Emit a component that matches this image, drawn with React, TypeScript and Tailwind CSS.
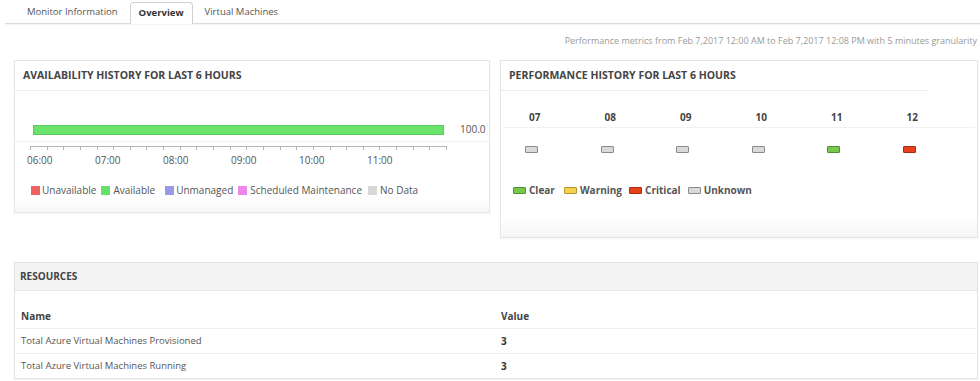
import React from "react";

const hours = ["06:00", "07:00", "08:00", "09:00", "10:00", "11:00"];
const perfCols = [
  { h: "07", fill: "#d9d9d9", stroke: "#8a8a8a" },
  { h: "08", fill: "#d9d9d9", stroke: "#8a8a8a" },
  { h: "09", fill: "#d9d9d9", stroke: "#8a8a8a" },
  { h: "10", fill: "#d9d9d9", stroke: "#8a8a8a" },
  { h: "11", fill: "#78c84e", stroke: "#4f8f30" },
  { h: "12", fill: "#e8401c", stroke: "#a82a10" },
];

function PerfBox({ fill, stroke }: { fill: string; stroke: string }) {
  return (
    <span
      className="inline-block w-[13px] h-[7px] rounded-[1px] border"
      style={{ background: fill, borderColor: stroke }}
    />
  );
}

export default function App() {
  const ticks = Array.from({ length: 26 }, (_, i) => 1 + (i * 416) / 25);
  return (
    <div className="w-[980px] h-[381px] bg-white overflow-hidden font-['Open_Sans',sans-serif] text-[#555]">
      {/* Tabs */}
      <div className="ml-[5px] h-[24px] flex items-end pl-[22px] border-b border-[#dcdcdc] shadow-[0_1px_1px_rgba(0,0,0,0.04)]">
        <div className="h-[21px] flex items-center text-[9.5px] text-[#555] mr-[12px]">Monitor Information</div>
        <div className="h-[22px] px-[8px] flex items-center text-[9.5px] font-bold text-[#333] bg-white border border-[#d0d0d0] border-b-0 rounded-t-[4px] -mb-px">
          Overview
        </div>
        <div className="h-[21px] ml-[12px] flex items-center text-[9.5px] text-[#555]">Virtual Machines</div>
      </div>

      {/* Metrics text */}
      <div className="mt-[10px] pr-[3px] text-right text-[9px] leading-[14px] text-[#9a9a9a]">
        Performance metrics from Feb 7,2017 12:00 AM to Feb 7,2017 12:08 PM with 5 minutes granularity
      </div>

      {/* Panels */}
      <div className="mt-[12px] pl-[14px] flex items-start gap-[10px]">
        {/* Availability */}
        <div className="w-[476px] h-[153px] border border-[#e6e6e6] shadow-[0_1px_2px_rgba(0,0,0,0.05)] flex flex-col bg-gradient-to-b from-white from-[90%] to-[#f6f6f6]">
          <div className="h-[30px] flex items-center px-[8px] border-b border-[#ececec] text-[10.5px] font-bold text-[#444] uppercase">
            Availability History for Last 6 Hours
          </div>
          <div className="pt-[31px] flex items-center">
            <div className="ml-[18px] w-[411px] h-[10px] bg-[#6ae36a] border border-[#5acb5a]" />
            <div className="ml-[16px] text-[10px] text-[#555]">100.0</div>
          </div>
          <div className="mt-[4px] border-t border-[#f2f2f2]" />
          <svg className="ml-[14px] mt-[4px]" width="420" height="6" viewBox="0 0 420 6">
            <line x1="1" y1="0.5" x2="417" y2="0.5" stroke="#b5b5b5" strokeWidth="1" />
            {ticks.map((x, i) => (
              <line key={i} x1={Math.round(x) + 0.5} y1="0" x2={Math.round(x) + 0.5} y2="4" stroke="#b5b5b5" strokeWidth="1" />
            ))}
          </svg>
          <div className="ml-[12px] mt-[1px] flex text-[10px] text-[#555] leading-[14px]">
            {hours.map((h) => (
              <div key={h} className="w-[68px]">{h}</div>
            ))}
          </div>
          <div className="ml-[16px] mt-[16px] flex items-center text-[10px] text-[#555] leading-[14px]">
            <span className="w-[9px] h-[9px] bg-[#f06262] mr-[2px]" />
            <span className="mr-[5px]">Unavailable</span>
            <span className="w-[9px] h-[9px] bg-[#66e066] mr-[3px]" />
            <span className="mr-[10px]">Available</span>
            <span className="w-[9px] h-[9px] bg-[#9a9ae8] mr-[2px]" />
            <span className="mr-[5px]">Unmanaged</span>
            <span className="w-[9px] h-[9px] bg-[#ee86ee] mr-[3px]" />
            <span className="mr-[6px]">Scheduled Maintenance</span>
            <span className="w-[9px] h-[9px] bg-[#d8d8d8] mr-[3px]" />
            <span>No Data</span>
          </div>
        </div>

        {/* Performance */}
        <div className="w-[478px] h-[178px] border border-[#e6e6e6] shadow-[0_1px_2px_rgba(0,0,0,0.05)] flex flex-col bg-gradient-to-b from-white from-[88%] to-[#f6f6f6]">
          <div className="w-[428px] h-[30px] flex items-center px-[8px] border-b border-[#ececec] text-[10.5px] font-bold text-[#444] uppercase">
            Performance History for Last 6 Hours
          </div>
          <div className="grid grid-cols-6 w-[453px] -ml-[4px] mt-[20px] text-[10px] font-bold text-[#444] leading-[12px]">
            {perfCols.map((c) => (
              <div key={c.h} className="text-center">{c.h}</div>
            ))}
          </div>
          <div className="mt-[4px] mx-[2px] border-t border-[#f2f2f2]" />
          <div className="grid grid-cols-6 w-[453px] -ml-[7px] mt-[18px]">
            {perfCols.map((c) => (
              <div key={c.h} className="flex justify-center">
                <PerfBox fill={c.fill} stroke={c.stroke} />
              </div>
            ))}
          </div>
          <div className="ml-[12px] mt-[30px] flex items-center text-[10px] font-bold text-[#555] leading-[14px]">
            <PerfBox fill="#78c84e" stroke="#4f8f30" />
            <span className="ml-[3px] mr-[9px]">Clear</span>
            <PerfBox fill="#f5d24e" stroke="#b49530" />
            <span className="ml-[3px] mr-[7px]">Warning</span>
            <PerfBox fill="#e8401c" stroke="#a82a10" />
            <span className="ml-[3px] mr-[7px]">Critical</span>
            <PerfBox fill="#d9d9d9" stroke="#8a8a8a" />
            <span className="ml-[3px]">Unknown</span>
          </div>
        </div>
      </div>

      {/* Resources */}
      <div className="ml-[14px] mt-[24px] w-[964px] border border-[#e3e3e3] shadow-[0_1px_2px_rgba(0,0,0,0.05)]">
        <div className="h-[28px] flex items-center px-[5px] bg-[#f4f4f4] border-b border-[#e6e6e6] text-[10px] font-bold text-[#444]">
          RESOURCES
        </div>
        <div className="pt-[14px]">
          <div className="h-[24px] flex items-center px-[6px] border-b border-[#efefef] text-[10px] font-bold text-[#444]">
            <div className="w-[480px]">Name</div>
            <div>Value</div>
          </div>
          <div className="h-[25px] flex items-center px-[6px] border-b border-[#efefef] text-[9.5px] text-[#555]">
            <div className="w-[480px]">Total Azure Virtual Machines Provisioned</div>
            <div className="font-bold text-[#333] text-[10px]">3</div>
          </div>
          <div className="h-[24px] flex items-center px-[6px] text-[9.5px] text-[#555]">
            <div className="w-[480px]">Total Azure Virtual Machines Running</div>
            <div className="font-bold text-[#333] text-[10px]">3</div>
          </div>
        </div>
      </div>
    </div>
  );
}
